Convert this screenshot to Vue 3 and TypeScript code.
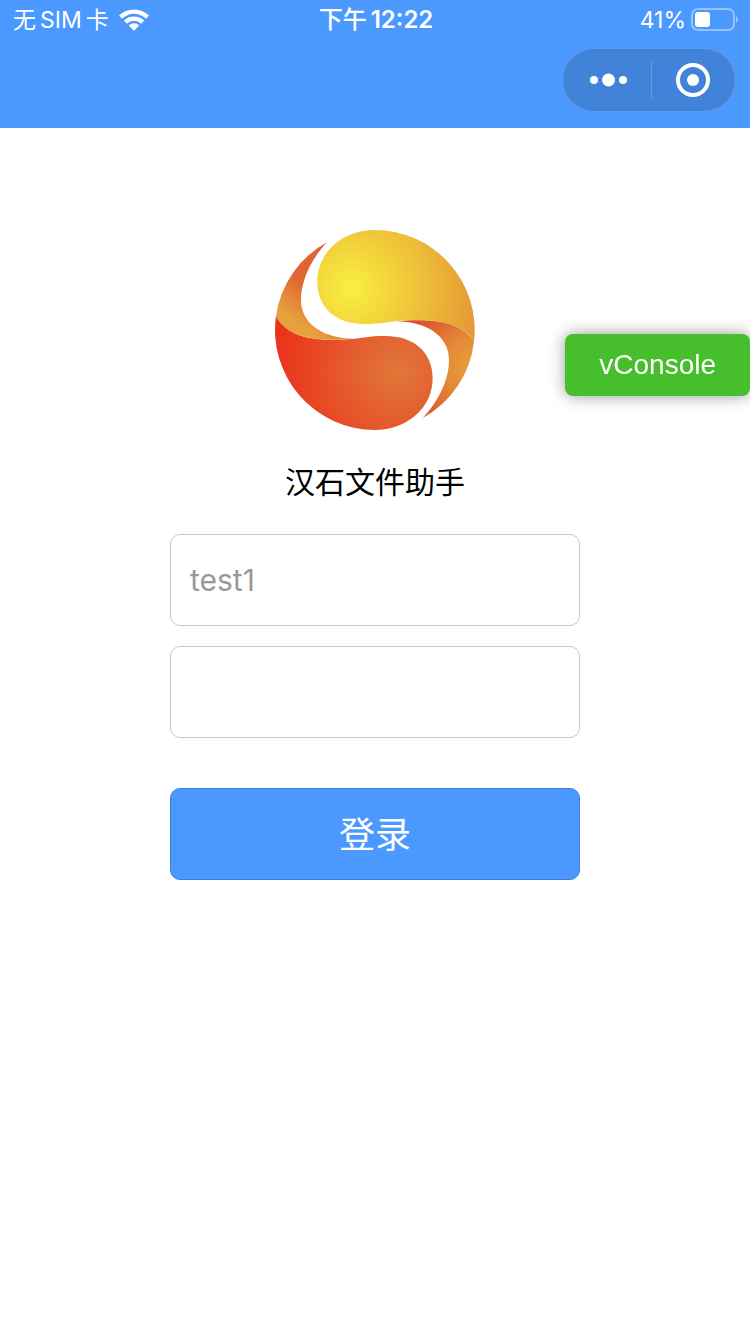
<script setup lang="ts">
import { ref } from 'vue'

const account = ref<string>('')
const password = ref<string>('')
</script>

<template>
  <div class="page">
    <header class="top">
      <div class="status">
        <div class="carrier">
          <span class="words"><span>无</span><span>SIM</span><span>卡</span></span>
          <svg class="wifi" viewBox="0 0 30 22" aria-hidden="true">
            <path d="M0 6.6 A21.5 21.5 0 0 1 30 6.6 L27 9.8 A17 17 0 0 0 3 9.8 Z" />
            <path d="M4.9 11.6 A14.3 14.3 0 0 1 25.1 11.6 L22.1 14.7 A10 10 0 0 0 7.9 14.7 Z" />
            <path d="M9.7 16.4 A7.5 7.5 0 0 1 20.3 16.4 L15 21.8 Z" />
          </svg>
        </div>
        <div class="clock"><span>下午</span><time>12:22</time></div>
        <div class="power">
          <span>41%</span>
          <svg class="battery" viewBox="0 0 48 24" aria-hidden="true">
            <rect x="1" y="1" width="42" height="21" rx="6" fill="none" stroke="#fff" stroke-opacity="0.4" stroke-width="2" />
            <rect x="4" y="4" width="15" height="15" rx="3" fill="#fff" />
            <path d="M45 8 Q49 11.5 45 15 Z" fill="#fff" fill-opacity="0.45" />
          </svg>
        </div>
      </div>
      <div class="capsule">
        <button class="more" type="button" aria-label="更多">
          <svg class="dots" viewBox="0 0 38 14" aria-hidden="true">
            <circle cx="4" cy="7" r="4" />
            <circle cx="18.5" cy="7" r="6.5" />
            <circle cx="33" cy="7" r="4" />
          </svg>
        </button>
        <button type="button" aria-label="关闭">
          <svg class="target" viewBox="0 0 34 34" aria-hidden="true">
            <circle cx="17" cy="17" r="15" fill="none" stroke="#fff" stroke-width="4" />
            <circle cx="17" cy="17" r="6" />
          </svg>
        </button>
      </div>
    </header>

    <main class="login">
      <svg class="logo" viewBox="30 30 600 600" role="img" aria-label="汉石文件助手">
        <defs>
          <radialGradient id="sun" gradientUnits="userSpaceOnUse" cx="260" cy="205" r="370">
            <stop offset="0" stop-color="#faef3f" />
            <stop offset="0.5" stop-color="#efc639" />
            <stop offset="1" stop-color="#e69a36" />
          </radialGradient>
          <radialGradient id="fire" gradientUnits="userSpaceOnUse" cx="400" cy="455" r="370">
            <stop offset="0" stop-color="#e07839" />
            <stop offset="0.5" stop-color="#e6552b" />
            <stop offset="1" stop-color="#ea331b" />
          </radialGradient>
          <linearGradient id="leftRibbon" gradientUnits="userSpaceOnUse" x1="120" y1="190" x2="55" y2="275">
            <stop offset="0" stop-color="#e06434" />
            <stop offset="1" stop-color="#e8a03c" />
          </linearGradient>
          <radialGradient id="rightRibbon" gradientUnits="userSpaceOnUse" cx="625" cy="440" r="220">
            <stop offset="0" stop-color="#e8a038" />
            <stop offset="0.4" stop-color="#e48a38" />
            <stop offset="1" stop-color="#da4a28" />
          </radialGradient>
        </defs>
        <path fill="url(#sun)" d="M330 30 C235 30 157 95 157 185 C157 265 215 312 300 312 C345 312 375 305 400 303 C480 296 590 298 627 365 A300 300 0 0 0 330 30 Z" />
        <path fill="url(#rightRibbon)" d="M395 304 C480 296 590 298 627 365 A300 300 0 0 1 473 594 C520 545 552 480 552 420 C552 345 480 305 395 304 Z" />
        <path fill="url(#fire)" d="M330 630 C425 630 503 565 503 475 C503 395 445 348 360 348 C315 348 285 355 260 357 C180 364 70 362 33 288 A300 300 0 0 0 330 630 Z" />
        <path fill="url(#leftRibbon)" d="M265 356 C180 364 70 362 33 288 A300 300 0 0 1 187 66 C140 115 108 180 108 240 C108 315 180 355 265 356 Z" />
      </svg>
      <h1>汉石文件助手</h1>
      <form @submit.prevent>
        <input v-model="account" type="text" placeholder="test1" aria-label="账号" autocomplete="username" />
        <input v-model="password" type="password" aria-label="密码" autocomplete="current-password" />
        <button class="submit" type="submit">登录</button>
      </form>
    </main>

    <button class="console" type="button">vConsole</button>
  </div>
</template>

<style>
body {
  margin: 0;
  background: #fff;
}
</style>

<style scoped>
.page {
  min-height: 100vh;
  font-family: Inter, "Noto Sans CJK SC", sans-serif;
  color: #000;
}

button,
input {
  box-sizing: border-box;
  margin: 0;
  font-family: inherit;
}

.top {
  display: flex;
  flex-direction: column;
  gap: 8px;
  box-sizing: border-box;
  padding-bottom: 16px;
  background: #4b99ff;
  color: #fff;
}

.status {
  display: grid;
  grid-template-columns: 1fr auto 1fr;
  align-items: center;
  height: 40px;
  padding: 0 11px 0 13px;
  font-size: 23px;
  font-weight: 400;
  line-height: 40px;
}

.carrier,
.words,
.clock,
.power {
  display: flex;
  align-items: center;
}

.carrier {
  gap: 10px;
}

.words {
  gap: 4px;
}

.wifi {
  width: 30px;
  height: 22px;
  fill: #fff;
}

.clock {
  gap: 4px;
  font-size: 24px;
  font-weight: 500;
}

.clock time {
  font-weight: 600;
}

.power {
  justify-content: flex-end;
  gap: 5px;
}

.battery {
  width: 48px;
  height: 24px;
}

.capsule {
  display: flex;
  align-self: flex-end;
  align-items: center;
  box-sizing: border-box;
  width: 174px;
  height: 64px;
  margin-right: 14px;
  border: 1px solid #5c9cea;
  border-radius: 32px;
  background: #4083d9;
}

.capsule button {
  display: flex;
  flex: 1;
  align-items: center;
  justify-content: center;
  height: 38px;
  padding: 0;
  border: 0;
  background: none;
}

.capsule .more {
  padding-left: 4px;
}

.capsule button + button {
  border-left: 1px solid #5c9cea;
}

.capsule svg {
  fill: #fff;
}

.dots {
  width: 38px;
  height: 14px;
}

.target {
  width: 34px;
  height: 34px;
}

.login {
  display: flex;
  flex-direction: column;
  align-items: center;
  padding: 102px 20px 40px;
}

.logo {
  width: 200px;
  height: 200px;
}

h1 {
  margin: 30px 0;
  font-size: 30px;
  font-weight: 400;
  line-height: 44px;
}

form {
  display: flex;
  flex-direction: column;
  gap: 20px;
  width: 100%;
  max-width: 410px;
}

input {
  width: 100%;
  height: 92px;
  padding: 0 19px;
  border: 1px solid #c8c8c8;
  border-radius: 10px;
  background: #fff;
  font-size: 30px;
}

input::placeholder {
  color: #999;
  opacity: 1;
}

.submit {
  height: 92px;
  margin-top: 30px;
  padding: 0 0 4px;
  border: 1px solid #3d7fd9;
  border-radius: 10px;
  background: #4b99ff;
  color: #fff;
  font-size: 36px;
}

.console {
  position: fixed;
  top: 334px;
  right: 0;
  padding: 0 34px;
  border: 0;
  border-radius: 8px;
  background: #47be2b;
  box-shadow: 0 0 16px rgba(0, 0, 0, 0.4);
  color: #fff;
  font-family: "Liberation Sans", Arial, sans-serif;
  font-size: 28px;
  line-height: 62px;
}
</style>
